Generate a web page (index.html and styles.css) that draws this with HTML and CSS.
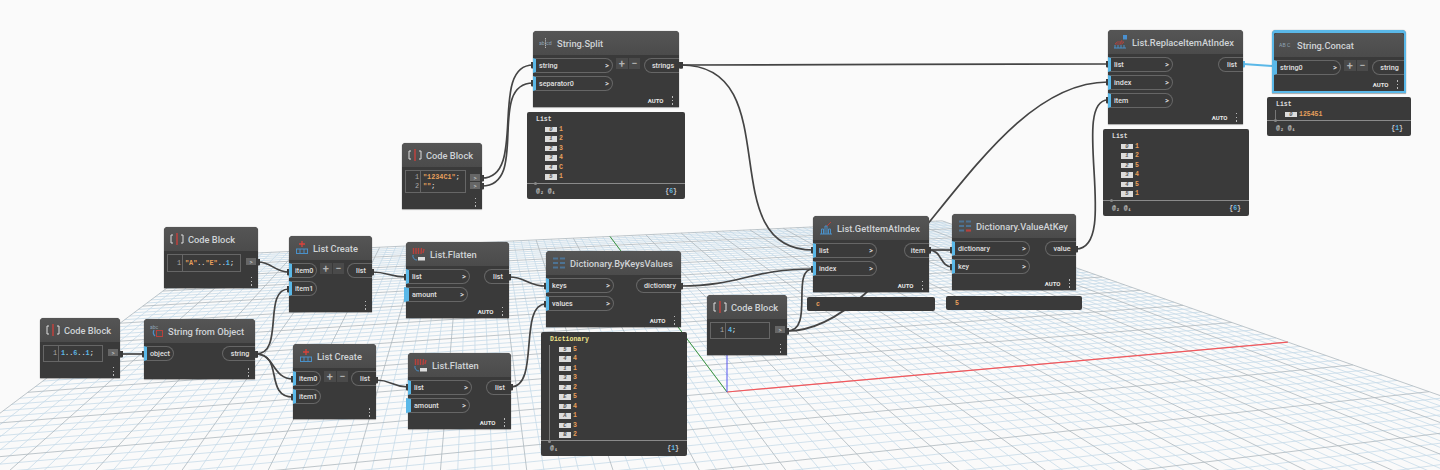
FILE: index.html
```html
<!DOCTYPE html>
<html>
<head>
	<title>Dynamo graph</title>
	<link rel="stylesheet" href="styles.css">
</head>
<body>
<div class="canvas">

	<svg class="layer" id="ground" width="1440" height="470"></svg>

	<svg class="icons" width="0" height="0">
		<symbol id="ic-code" viewBox="0 0 14 14">
			<path d="M3 3H1V11H3M11 3H13V11H11" fill="none" stroke="#ddd" stroke-width="1"/>
			<path d="M7 1V13" stroke="#c8413c" stroke-width="1.4"/>
		</symbol>
		<symbol id="ic-create" viewBox="0 0 14 14">
			<path d="M7 0V6M4 3H10" stroke="#d9433d" stroke-width="1.3"/>
			<path d="M1 8H13M1 12.5H13M1.5 8V12.5M5 8V12.5M9 8V12.5M12.5 8V12.5" stroke="#4a90c8" stroke-width="1" fill="none"/>
		</symbol>
		<symbol id="ic-flatten" viewBox="0 0 14 14">
			<path d="M1.500 1V7M4 1V7M6.500 1V7M9.500 1L9 7M12 2L11 6" stroke="#b8413c" stroke-width="1.400" fill="none"/>
			<path d="M1 8A4 4 0 0 0 5 13" stroke="#4a90c8" fill="none"/>
			<rect x="6" y="10" width="7" height="3.500" fill="#ddd"/>
		</symbol>
		<symbol id="ic-dict" viewBox="0 0 14 14">
			<path d="M1 2.500H6M8 2.500H13M1 7H6M8 7H13M1 11.500H6M8 11.500H13" stroke="#4d7394" stroke-width="2.200"/>
		</symbol>
		<symbol id="ic-valueat" viewBox="0 0 14 14">
			<path d="M1 2.500H6M8 2.500H13M1 7H6M8 7H13M1 11.500H6" stroke="#4d7394" stroke-width="2.200"/>
			<path d="M8 11.500H13" stroke="#b8413c" stroke-width="2.200"/>
		</symbol>
		<symbol id="ic-getitem" viewBox="0 0 14 14">
			<path d="M8 5L12 1" stroke="#b8413c" stroke-width="1"/>
			<path d="M1 13H13M2.500 13V8H4.500V13M6 13V5H8V13M9.500 13V8H11.500V13" stroke="#4a90c8" fill="none"/>
		</symbol>
		<symbol id="ic-replace" viewBox="0 0 14 14">
			<rect x="9" y="0" width="4" height="4.500" fill="#4a90d0"/>
			<path d="M3 7H10L8 9H1ZM6 9L8 5" fill="none" stroke="#b8413c" stroke-width=".8"/>
			<path d="M0 13H12M1 13V10M4 13V10M7 13V10M10 13V10" stroke="#4a90c8" fill="none"/>
		</symbol>
	</svg>

	<svg class="layer" width="1440" height="470">
		<defs>
			<marker id="nub" markerUnits="userSpaceOnUse" markerWidth="4" markerHeight="7" refX="2" refY="3.500">
				<rect width="4" height="7" rx="1" fill="#3a3a3a"/>
			</marker>
			<marker id="nub-blue" markerUnits="userSpaceOnUse" markerWidth="4" markerHeight="7" refX="2" refY="3.500">
				<rect width="4" height="7" rx="1" fill="#5ab8e8"/>
			</marker>
		</defs>
		<path class="axis-blue" d="M727 392V340"/>
		<g class="wires">
			<path d="M121 354H144"/>
			<path d="M256 354C285 354 262 289 289 289"/>
			<path d="M256 354C275 354 272 379 293 379"/>
			<path d="M256 354C284 354 264 397 293 397"/>
			<path d="M258 262C272 262 274 272 289 272"/>
			<path d="M372 272C388 272 390 277 406 277"/>
			<path d="M376 380C392 380 392 387 408 387"/>
			<path d="M509 277C526 277 528 286 546 286"/>
			<path d="M511 387C540 387 518 304 546 304"/>
			<path d="M681 286C740 286 750 269 813 269"/>
			<path d="M787 331C815 331 790 269 813 269"/>
			<path d="M787 331C900 331 980 82 1108 82"/>
			<path d="M681 65C780 65 1000 64 1108 64"/>
			<path d="M681 65C790 65 710 250 813 250"/>
			<path d="M929 250H952"/>
			<path d="M929 250C942 250 940 267 952 267"/>
			<path d="M1076 249C1120 249 1070 100 1108 100"/>
			<path d="M482 178C528 178 488 65 533 65"/>
			<path d="M482 186C530 186 486 83 533 83"/>
			<path class="wire-on" d="M1243 64L1272 66"/>
		</g>
	</svg>

	<div class="node n-cb1">
		<div class="node-head"><svg class="ic"><use href="#ic-code"/></svg><span class="title">Code Block</span></div>
		<div class="code-body">
			<div class="code-input">
				<div class="gutter"><span>1</span></div>
				<div class="code"><span class="num">1</span>..<span class="num">6</span>..<span class="num">1</span>;</div>
			</div>
			<div class="code-outs"><span class="chip">&gt;</span></div>
		</div>
		<div class="node-foot"><span class="kebab"></span></div>
	</div>

	<div class="node n-obj">
		<div class="node-head">
			<svg class="ic" viewBox="0 0 14 14">
				<path d="M4 6A5 5 0 0 0 5 12" fill="none" stroke="#4a90c8" stroke-width="1.2"/>
				<rect x="6.500" y="6.500" width="6" height="6" fill="none" stroke="#b8413c"/>
				<text x="0" y="5" class="ic-label">abc</text>
			</svg>
			<span class="title">String from Object</span>
		</div>
		<div class="node-ports">
			<div class="inputs"><div class="port w-object">object</div></div>
			<div class="outputs"><div class="port out w-string">string</div></div>
		</div>
		<div class="node-foot"><span class="kebab"></span></div>
	</div>

	<div class="node n-cb2">
		<div class="node-head"><svg class="ic"><use href="#ic-code"/></svg><span class="title">Code Block</span></div>
		<div class="code-body">
			<div class="code-input">
				<div class="gutter"><span>1</span></div>
				<div class="code"><span class="str">"A"</span>..<span class="str">"E"</span>..<span class="num">1</span>;</div>
			</div>
			<div class="code-outs"><span class="chip">&gt;</span></div>
		</div>
		<div class="node-foot"><span class="kebab"></span></div>
	</div>

	<div class="node n-lc1">
		<div class="node-head"><svg class="ic"><use href="#ic-create"/></svg><span class="title">List Create</span></div>
		<div class="node-ports">
			<div class="inputs">
				<div class="port w-item">item0</div>
				<div class="port w-item">item1</div>
			</div>
			<div class="plusminus"><span>+</span><span>−</span></div>
			<div class="outputs"><div class="port out w-list">list</div></div>
		</div>
		<div class="node-foot"><span class="kebab"></span></div>
	</div>

	<div class="node n-lc2">
		<div class="node-head"><svg class="ic"><use href="#ic-create"/></svg><span class="title">List Create</span></div>
		<div class="node-ports">
			<div class="inputs">
				<div class="port w-item">item0</div>
				<div class="port w-item">item1</div>
			</div>
			<div class="plusminus"><span>+</span><span>−</span></div>
			<div class="outputs"><div class="port out w-list">list</div></div>
		</div>
		<div class="node-foot"><span class="kebab"></span></div>
	</div>

	<div class="node n-fl1">
		<div class="node-head"><svg class="ic"><use href="#ic-flatten"/></svg><span class="title">List.Flatten</span></div>
		<div class="node-ports">
			<div class="inputs">
				<div class="port w-flat">list<i>&gt;</i></div>
				<div class="port dflt w-flat">amount<i>&gt;</i></div>
			</div>
			<div class="outputs"><div class="port out w-list">list</div></div>
		</div>
		<div class="node-foot"><span class="auto">AUTO</span><span class="kebab"></span></div>
	</div>

	<div class="node n-fl2">
		<div class="node-head"><svg class="ic"><use href="#ic-flatten"/></svg><span class="title">List.Flatten</span></div>
		<div class="node-ports">
			<div class="inputs">
				<div class="port w-flat">list<i>&gt;</i></div>
				<div class="port dflt w-flat">amount<i>&gt;</i></div>
			</div>
			<div class="outputs"><div class="port out w-list">list</div></div>
		</div>
		<div class="node-foot"><span class="auto">AUTO</span><span class="kebab"></span></div>
	</div>

	<div class="node n-dict">
		<div class="node-head"><svg class="ic"><use href="#ic-dict"/></svg><span class="title">Dictionary.ByKeysValues</span></div>
		<div class="node-ports">
			<div class="inputs">
				<div class="port w-keys">keys<i>&gt;</i></div>
				<div class="port w-keys">values<i>&gt;</i></div>
			</div>
			<div class="outputs"><div class="port out w-dict">dictionary</div></div>
		</div>
		<div class="node-foot"><span class="auto">AUTO</span><span class="kebab"></span></div>
	</div>

	<div class="watch v-dict">
		<div class="tree">
			<div class="tree-name yellow">Dictionary</div>
			<div class="items">
				<div class="item"><span class="key">5</span><span class="val">5</span></div>
				<div class="item"><span class="key">4</span><span class="val">4</span></div>
				<div class="item"><span class="key">1</span><span class="val">1</span></div>
				<div class="item"><span class="key">3</span><span class="val">3</span></div>
				<div class="item"><span class="key">2</span><span class="val">2</span></div>
				<div class="item"><span class="key">E</span><span class="val">5</span></div>
				<div class="item"><span class="key">D</span><span class="val">4</span></div>
				<div class="item"><span class="key">A</span><span class="val">1</span></div>
				<div class="item"><span class="key">C</span><span class="val">3</span></div>
				<div class="item"><span class="key">B</span><span class="val">2</span></div>
			</div>
		</div>
		<div class="levels"><span>@₁</span><span class="count">{<b>1</b>}</span></div>
	</div>

	<div class="node n-cb3">
		<div class="node-head"><svg class="ic"><use href="#ic-code"/></svg><span class="title">Code Block</span></div>
		<div class="code-body">
			<div class="code-input">
				<div class="gutter"><span>1</span><span>2</span></div>
				<div class="code"><div><span class="str">"1234C1"</span>;</div><div><span class="str">""</span>;</div></div>
			</div>
			<div class="code-outs"><span class="chip">&gt;</span><span class="chip">&gt;</span></div>
		</div>
		<div class="node-foot"><span class="kebab"></span></div>
	</div>

	<div class="node n-split">
		<div class="node-head">
			<svg class="ic" viewBox="0 0 14 14">
				<text x="0" y="9" class="ic-label wide">ab cd</text>
				<path d="M6.500 2V12" stroke="#ddd" stroke-width=".7" stroke-dasharray="1.500 .7"/>
			</svg>
			<span class="title">String.Split</span>
		</div>
		<div class="node-ports">
			<div class="inputs">
				<div class="port w-split">string<i>&gt;</i></div>
				<div class="port w-split">separator0<i>&gt;</i></div>
			</div>
			<div class="plusminus"><span>+</span><span>−</span></div>
			<div class="outputs"><div class="port out w-strings">strings</div></div>
		</div>
		<div class="node-foot"><span class="auto">AUTO</span><span class="kebab"></span></div>
	</div>

	<div class="watch v-split">
		<div class="tree">
			<div class="tree-name">List</div>
			<div class="items no-line">
				<div class="item"><span class="key">0</span><span class="val">1</span></div>
				<div class="item"><span class="key">1</span><span class="val">2</span></div>
				<div class="item"><span class="key">2</span><span class="val">3</span></div>
				<div class="item"><span class="key">3</span><span class="val">4</span></div>
				<div class="item"><span class="key">4</span><span class="val">C</span></div>
				<div class="item"><span class="key">5</span><span class="val">1</span></div>
			</div>
		</div>
		<div class="levels"><span>@₂ @₁</span><span class="count">{<b>6</b>}</span></div>
	</div>

	<div class="node n-cb4">
		<div class="node-head"><svg class="ic"><use href="#ic-code"/></svg><span class="title">Code Block</span></div>
		<div class="code-body">
			<div class="code-input">
				<div class="gutter"><span>1</span></div>
				<div class="code"><span class="num">4</span>;</div>
			</div>
			<div class="code-outs"><span class="chip">&gt;</span></div>
		</div>
		<div class="node-foot"><span class="kebab"></span></div>
	</div>

	<div class="node n-get">
		<div class="node-head"><svg class="ic"><use href="#ic-getitem"/></svg><span class="title">List.GetItemAtIndex</span></div>
		<div class="node-ports">
			<div class="inputs">
				<div class="port w-flat">list<i>&gt;</i></div>
				<div class="port w-flat">index<i>&gt;</i></div>
			</div>
			<div class="outputs"><div class="port out w-list">item</div></div>
		</div>
		<div class="node-foot"><span class="auto">AUTO</span><span class="kebab"></span></div>
	</div>
	<div class="watch single v-get"><span class="val">c</span></div>

	<div class="node n-value">
		<div class="node-head"><svg class="ic"><use href="#ic-valueat"/></svg><span class="title">Dictionary.ValueAtKey</span></div>
		<div class="node-ports">
			<div class="inputs">
				<div class="port w-value">dictionary<i>&gt;</i></div>
				<div class="port w-value">key<i>&gt;</i></div>
			</div>
			<div class="outputs"><div class="port out w-list-l">value</div></div>
		</div>
		<div class="node-foot"><span class="auto">AUTO</span><span class="kebab"></span></div>
	</div>
	<div class="watch single v-value"><span class="val">5</span></div>

	<div class="node n-replace">
		<div class="node-head"><svg class="ic"><use href="#ic-replace"/></svg><span class="title">List.ReplaceItemAtIndex</span></div>
		<div class="node-ports">
			<div class="inputs">
				<div class="port w-replace">list<i>&gt;</i></div>
				<div class="port w-replace">index<i>&gt;</i></div>
				<div class="port w-replace">item<i>&gt;</i></div>
			</div>
			<div class="outputs"><div class="port out w-list">list</div></div>
		</div>
		<div class="node-foot"><span class="auto">AUTO</span><span class="kebab"></span></div>
	</div>

	<div class="watch v-replace">
		<div class="tree">
			<div class="tree-name">List</div>
			<div class="items no-line">
				<div class="item"><span class="key">0</span><span class="val">1</span></div>
				<div class="item"><span class="key">1</span><span class="val">2</span></div>
				<div class="item"><span class="key">2</span><span class="val">5</span></div>
				<div class="item"><span class="key">3</span><span class="val">4</span></div>
				<div class="item"><span class="key">4</span><span class="val">5</span></div>
				<div class="item"><span class="key">5</span><span class="val">1</span></div>
			</div>
		</div>
		<div class="levels"><span>@₂ @₁</span><span class="count">{<b>6</b>}</span></div>
	</div>

	<div class="node selected n-concat">
		<div class="node-head">
			<svg class="ic" viewBox="0 0 14 14"><text x="0" y="9" class="ic-label wide">AB C</text></svg>
			<span class="title">String.Concat</span>
		</div>
		<div class="node-ports">
			<div class="inputs"><div class="port w-concat">string0<i>&gt;</i></div></div>
			<div class="plusminus"><span>+</span><span>−</span></div>
			<div class="outputs"><div class="port out w-string-s">string</div></div>
		</div>
		<div class="node-foot"><span class="auto">AUTO</span><span class="kebab"></span></div>
	</div>

	<div class="watch v-concat">
		<div class="tree">
			<div class="tree-name">List</div>
			<div class="items">
				<div class="item"><span class="key">0</span><span class="val">125451</span></div>
			</div>
		</div>
		<div class="levels"><span>@₂ @₁</span><span class="count">{<b>1</b>}</span></div>
	</div>

</div>
<script src="grid.js"></script>
</body>
</html>
```

FILE: styles.css
```css
html,body{
	margin: 0;
	padding: 0;
	background: #fafafa;
}
.canvas{
	position: relative;
	width: 1440px;
	height: 470px;
	overflow: hidden;
	font-family: Roboto, "Liberation Sans", sans-serif;
}
.layer{
	position: absolute;
	left: 0;
	top: 0;
}
.icons{
	position: absolute;
}
.ic-label{
	font-family: Roboto, sans-serif;
	font-size: 5px;
	fill: #8ea3b5;
}
.ic-label.wide{
	font-size: 5.2px;
}

/* ground grid, filled by grid.js */
.minor{
	stroke: #c6dbe9;
	stroke-width: .8;
}
.major{
	stroke: #adb8be;
	stroke-width: .8;
}
.axis-red{
	stroke: #f4575c;
	stroke-width: 1.2;
}
.axis-green{
	stroke: #3f9b45;
	stroke-width: 1;
}
.axis-blue{
	stroke: #5555ee;
	stroke-width: 1;
}

/* wires */
.wires path{
	fill: none;
	stroke: #444;
	stroke-width: 1.7;
	marker-start: url(#nub);
	marker-end: url(#nub);
}
.wires .wire-on{
	stroke: #5ab8e8;
	stroke-width: 2;
	marker-start: url(#nub-blue);
	marker-end: none;
}

/* nodes */
.node{
	position: absolute;
	display: flex;
	flex-direction: column;
	background: #3a3a3a;
	border-radius: 4px 4px 0 0;
	box-shadow: 0 0 1px #777, 0 1px 1px rgba(0,0,0,.3);
}
.node-head{
	display: flex;
	align-items: center;
	flex: none;
	height: 24px;
	padding-left: 6px;
	background: linear-gradient(#555, #4b4b4b);
	border-radius: 4px 4px 0 0;
}
.ic{
	flex: none;
	width: 14px;
	height: 14px;
	margin-right: 4px;
}
.title{
	color: #cfd3d6;
	font-size: 9.3px;
	font-weight: 500;
	white-space: nowrap;
}
.node-ports{
	display: flex;
	align-items: flex-start;
	padding-top: 3px;
}
.inputs{
	display: flex;
	flex-direction: column;
	gap: 3px;
}
.outputs{
	display: flex;
	flex-direction: column;
	margin-left: auto;
}
.port{
	display: flex;
	align-items: center;
	justify-content: space-between;
	box-sizing: border-box;
	height: 15px;
	padding: 0 3px 0 3px;
	border: 1px solid #666;
	border-left: 3px solid #5ab8e8;
	border-radius: 0 8px 8px 0;
	color: #e0e0e0;
	font-size: 7.2px;
	font-weight: 500;
	white-space: nowrap;
}
.port i{
	font-style: normal;
	font-size: 7.5px;
}
.port.dflt{
	margin-left: -2px;
	border-left-width: 5px;
}
.port.out{
	justify-content: center;
	padding: 0 2px 0 4px;
	border: 1px solid #666;
	border-right: 0;
	border-radius: 8px 0 0 8px;
}
.plusminus{
	display: flex;
	gap: 1px;
	margin-left: 3px;
}
.plusminus span{
	display: flex;
	align-items: center;
	justify-content: center;
	width: 11.5px;
	height: 11px;
	background: #4a4a4a;
	color: #b4b4b4;
	font-size: 11px;
	font-weight: 500;
}
.node-foot{
	display: flex;
	align-items: center;
	justify-content: flex-end;
	gap: 8px;
	margin-top: auto;
	height: 14px;
	padding-right: 6px;
}
.auto{
	color: #e8e8e8;
	font-size: 6px;
	font-weight: 700;
}
.kebab{
	width: 1.5px;
	height: 9px;
	background: repeating-linear-gradient(#bbb 0 1.5px, transparent 1.5px 3.7px);
}

/* code blocks */
.code-body{
	display: flex;
	align-items: flex-start;
	padding: 3px 2px 0 3px;
}
.code-input{
	display: flex;
	align-items: center;
	flex: none;
	box-sizing: border-box;
	border: 1px solid #666;
	font-family: "Liberation Mono", monospace;
	font-size: 6.8px;
	font-weight: 700;
	line-height: 9px;
	color: #d8d8d8;
}
.gutter{
	display: flex;
	flex-direction: column;
	align-items: flex-end;
	box-sizing: border-box;
	align-self: stretch;
	justify-content: center;
	width: 15px;
	padding-right: 1px;
	border-right: 1px solid #666;
	color: #aaa;
	font-weight: 400;
}
.code{
	padding-left: 2px;
	white-space: nowrap;
}
.num{
	color: #5ab8e8;
}
.str{
	color: #e8a05c;
}
.code-outs{
	display: flex;
	flex-direction: column;
	gap: 1px;
	margin-left: auto;
	padding-top: 4px;
}
.chip{
	display: block;
	width: 10px;
	height: 7px;
	background: #666;
	color: #ddd;
	font-size: 6px;
	line-height: 7px;
	text-align: center;
}

/* previews */
.watch{
	position: absolute;
	display: flex;
	flex-direction: column;
	box-sizing: border-box;
	background: #3a3a3a;
	border-radius: 2px;
	font-family: "Liberation Mono", monospace;
	font-size: 6.5px;
	font-weight: 700;
	color: #ddd;
}
.tree{
	flex: 1;
	padding: 3px 0 0 8px;
}
.tree-name{
	height: 9.5px;
	padding-left: 1px;
	line-height: 9.5px;
}
.yellow{
	color: #efe28a;
}
.items{
	position: relative;
	border-left: 1px solid #777;
}
.items::after{
	content: "";
	position: absolute;
	left: -2px;
	bottom: -3px;
	width: 3px;
	height: 3px;
	border-radius: 50%;
	background: #888;
}
.items.no-line{
	border-left-color: transparent;
}
.item{
	display: flex;
	align-items: center;
	height: 9.5px;
	padding-left: 9px;
}
.key{
	width: 12px;
	height: 5.5px;
	margin-right: 2px;
	background: #dcdcdc;
	color: #555;
	font-size: 5.5px;
	font-style: italic;
	line-height: 5.5px;
	text-align: center;
}
.val{
	color: #e8a05c;
}
.levels{
	display: flex;
	justify-content: space-between;
	flex: none;
	height: 15px;
	padding: 0 8px 0 9px;
	border-top: 1px solid #8a8a8a;
	line-height: 15px;
	color: #ccc;
}
.count b{
	color: #5ab8e8;
}
.watch.single{
	justify-content: center;
	padding-left: 9px;
}

/* port widths */
.w-object{width: 30px;}
.w-string{width: 33px;}
.w-item{width: 28px;}
.w-list{width: 25px;}
.w-list-l{width: 31px;}
.w-flat{width: 64px;}
.w-keys{width: 68px;}
.w-dict{width: 45px;}
.w-split{width: 80px;}
.w-strings{width: 35px;}
.w-value{width: 78px;}
.w-replace{width: 65px;}
.w-concat{width: 67px;}
.w-string-s{width: 32px;}

/* where each node sits on the canvas */
.n-cb1{left: 40px; top: 318px; width: 80px; height: 60px;}
.n-cb1 .code-input{width: 60px; height: 17px;}
.n-obj{left: 144px; top: 319px; width: 111px; height: 60px;}
.n-cb2{left: 164px; top: 227px; width: 94px; height: 61px;}
.n-cb2 .code-input{width: 74px; height: 18px;}
.n-lc1{left: 289px; top: 236px; width: 83px; height: 76px;}
.n-lc2{left: 293px; top: 344px; width: 83px; height: 75px;}
.n-fl1{left: 406px; top: 242px; width: 103px; height: 76px;}
.n-fl2{left: 408px; top: 353px; width: 103px; height: 76px;}
.n-dict{left: 546px; top: 251px; width: 135px; height: 76px;}
.n-cb3{left: 402px; top: 143px; width: 80px; height: 66px;}
.n-cb3 .code-input{width: 61px; height: 23px;}
.n-split{left: 533px; top: 31px; width: 146px; height: 76px;}
.n-cb4{left: 707px; top: 295px; width: 80px; height: 60px;}
.n-cb4 .code-input{width: 60px; height: 17px;}
.n-get{left: 813px; top: 216px; width: 116px; height: 76px;}
.n-value{left: 952px; top: 214px; width: 124px; height: 76px;}
.n-replace{left: 1108px; top: 30px; width: 135px; height: 94px;}
.selected{
	box-sizing: border-box;
	border: 2px solid #5ab8e8;
	border-top-width: 3px;
}
.selected .node-head{
	padding-left: 5px;
}
.n-concat{left: 1272px; top: 30px; width: 134px; height: 63px;}

.v-dict{left: 541px; top: 332px; width: 146px; height: 124px;}
.v-split{left: 527px; top: 112px; width: 158px; height: 87px;}
.v-replace{left: 1103px; top: 129px; width: 146px; height: 87px;}
.v-concat{left: 1267px; top: 97px; width: 144px; height: 39px;}
.v-get{left: 807px; top: 297px; width: 128px; height: 14px;}
.v-value{left: 946px; top: 296px; width: 136px; height: 14px;}
```

FILE: grid.js
```js
// ground plane of the 3d view: projective map from (u,v) to the screen
var ns="http://www.w3.org/2000/svg";
var ground=document.getElementById("ground");
var VX=[4562,51],VY=[475,57],O=[727,392];
var a=0.1713,b=0.867;
var cells=50;//cells from the origin to an edge
var nearV=-30;//rows below this are far under the window

function project(u,v){
	var w=a*u+b*v+1;
	return [(a*u*VX[0]+b*v*VY[0]+O[0])/w,(a*u*VX[1]+b*v*VY[1]+O[1])/w];
}

function line(p,q,cls){
	var l=document.createElementNS(ns,"line");
	l.setAttribute("x1",p[0].toFixed(2));
	l.setAttribute("y1",p[1].toFixed(2));
	l.setAttribute("x2",q[0].toFixed(2));
	l.setAttribute("y2",q[1].toFixed(2));
	l.setAttribute("class",cls);
	ground.appendChild(l);
}

function family(step){
	var i;
	for(i=-cells;i<=cells;i+=step){
		if(step==1&&i%5==0){continue;}
		var cls=step==1?"minor":"major";
		line(project(i/cells,nearV/cells),project(i/cells,1),cls);
		if(i>=nearV){
			line(project(-1,i/cells),project(1,i/cells),cls);
		}
	}
}

family(1);
family(5);
line(O,project(1,0),"axis-red");
line(O,project(0,1),"axis-green");
```
